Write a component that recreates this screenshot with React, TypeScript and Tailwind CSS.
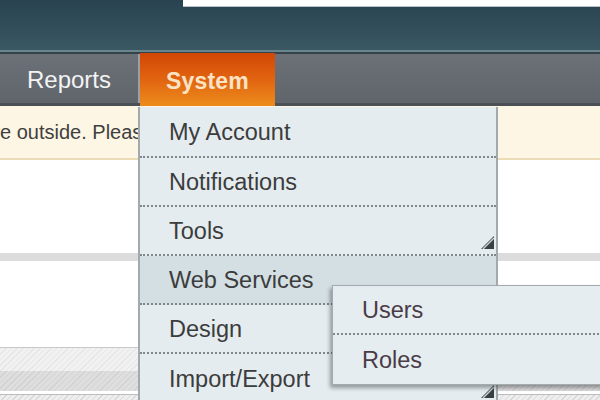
import React from 'react';

const MENU = ['My Account', 'Notifications', 'Tools', 'Web Services', 'Design', 'Import/Export'];
const WITH_ARROW = ['Tools', 'Import/Export'];

const Corner: React.FC = () => (
  <svg width="13" height="13" viewBox="0 0 13 13" className="absolute right-[2px] bottom-[5px]">
    <polygon points="13,0 13,13 0,13" fill="#3a3f43" />
    <line x1="2" y1="13" x2="13" y2="2" stroke="#c9d3d7" strokeWidth="1.4" />
  </svg>
);

const App: React.FC = () => {
  return (
    <div className="w-[600px] h-[400px] overflow-hidden bg-white font-['Liberation_Sans',Arial,sans-serif]">
      {/* Header */}
      <div className="h-[50px] bg-gradient-to-b from-[#294350] to-[#3a5764] flex items-start">
        <div className="ml-[183px] flex-1 h-[7px] bg-white border-b border-[#b9c3c8]" />
      </div>
      <div className="h-[2px] bg-[#6a848d]" />
      <div className="h-[2px] bg-[#34434a]" />

      {/* Nav */}
      <nav className="h-[52px] bg-gradient-to-b from-[#6b7177] via-[#666b72] to-[#60656b] border-b-[3px] border-[#4a5056] flex">
        <div className="w-[138px] flex items-center justify-center pt-[3px] text-[24px] text-[#f3f3f3]">Reports</div>
        <div className="w-[2px] bg-[#9aa0a6]" />
        <div className="w-[135px] -mt-[1px] h-[53px] pt-[3px] bg-gradient-to-b from-[#d24606] via-[#e16410] to-[#ec8c1c] flex items-center justify-center text-[23px] font-bold text-[#fbe3c4] tracking-[0.2px]">
          System
        </div>
      </nav>

      {/* Body */}
      <div className="relative">
        <div className="h-[54px] bg-[#fdf6e4] border-b-2 border-[#ecdcb6] flex items-center">
          <span className="text-[20px] text-[#3f3f3f] whitespace-nowrap">e outside. Pleas</span>
        </div>
        <div className="h-[93px] bg-white" />
        <div className="h-[8px] bg-[#dcdcdc]" />
        <div className="h-[87px] bg-white border-b border-[#c8c8c8]" />
        <div className="h-[23px] bg-[#f1f1f1] bg-[repeating-linear-gradient(135deg,#e6e6e6_0px,#e6e6e6_1px,transparent_1px,transparent_4px)]" />
        <div className="h-[20px] bg-[#dedede] bg-[repeating-linear-gradient(135deg,#d2d2d2_0px,#d2d2d2_1px,transparent_1px,transparent_4px)]" />
        <div className="h-[3px] bg-white" />
        <div className="h-[1px] bg-[#bcbcbc]" />
        <div className="h-[10px] bg-[#eeeeee] bg-[repeating-linear-gradient(135deg,#d8d8d8_0px,#d8d8d8_1px,transparent_1px,transparent_4px)]" />

        {/* Dropdown */}
        <div className="absolute left-[138px] top-[1px] w-[360px] bg-[#e4ecef] border-l-2 border-r-2 border-[#a3aaae] flex flex-col">
          {MENU.map((item, i) => (
            <div
              key={item}
              className={`relative flex items-center pl-[29px] pt-[3px] text-[23.5px] text-[#3c3c3c] ${
                i === 0 ? 'h-[51px]' : 'h-[49px]'
              } ${i < MENU.length - 1 ? 'border-b-2 border-dotted border-[#80868a]' : ''} ${
                item === 'Web Services' ? 'bg-[#d3dfe3]' : ''
              }`}
            >
              <span>{item}</span>
              {WITH_ARROW.includes(item) && <Corner />}
            </div>
          ))}
        </div>

        {/* Submenu */}
        <div className="absolute left-[332px] top-[179px] w-[280px] h-[100px] bg-[#e5edf0] border border-[#a4abaf] shadow-[-2px_3px_4px_rgba(0,0,0,0.35)] flex flex-col">
          <div className="h-[49px] flex items-center pl-[29px] pt-[3px] text-[23.5px] text-[#4a3c47] border-b-2 border-dotted border-[#80868a]">Users</div>
          <div className="flex-1 flex items-center pl-[29px] pt-[3px] text-[23.5px] text-[#4a3c47]">Roles</div>
        </div>
      </div>
    </div>
  );
};

export default App;
